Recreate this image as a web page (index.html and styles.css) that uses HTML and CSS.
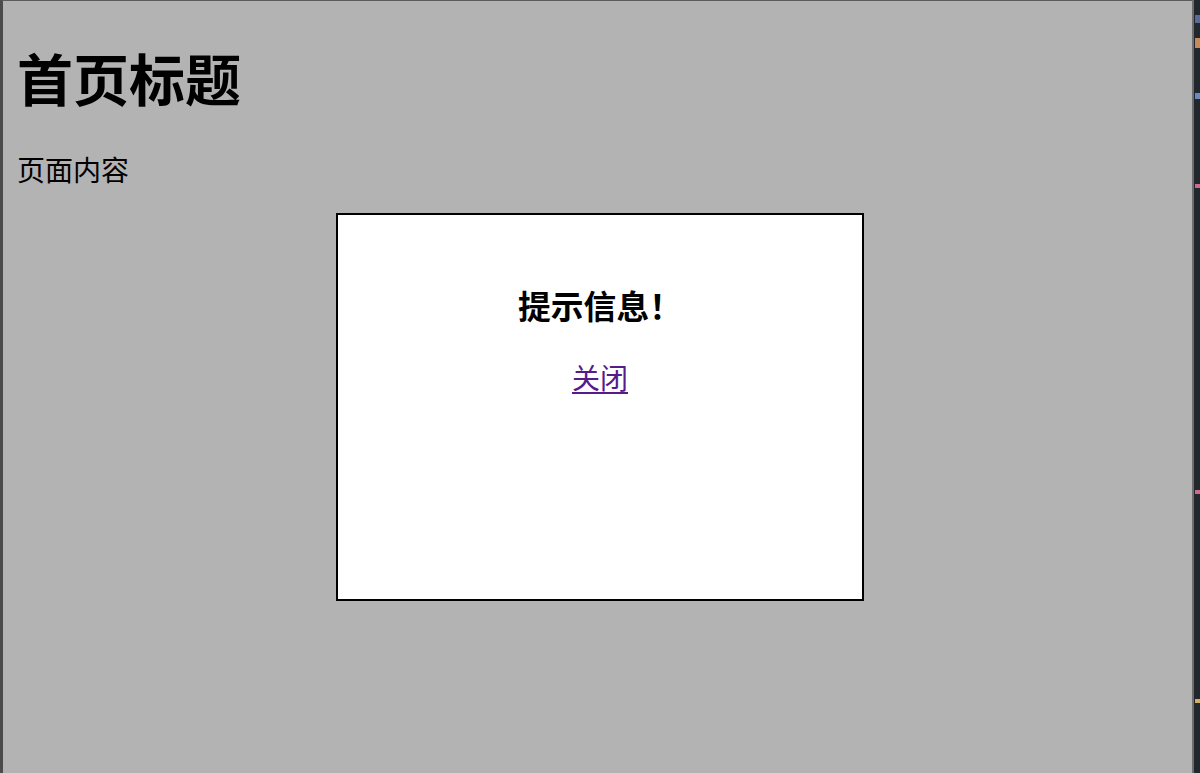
FILE: index.html
```html
<!DOCTYPE html>
<html lang="zh">
<head>
<meta charset="utf-8">
<title>首页</title>
<link rel="stylesheet" href="styles.css">
</head>
<body>
<div class="page">
  <h1 class="title">首页标题</h1>
  <p class="content">页面内容</p>
  <div class="modal">
    <h3 class="modal-title">提示信息！</h3>
    <p class="modal-action"><a class="close" href="#">关闭</a></p>
  </div>
</div>
<div class="editor">
  <span class="mark mark-a"></span>
  <span class="mark mark-b"></span>
  <span class="mark mark-c"></span>
  <span class="mark mark-d"></span>
  <span class="mark mark-e"></span>
  <span class="mark mark-f"></span>
</div>
</body>
</html>
```
FILE: styles.css
```css
html, body {
  margin: 0;
  height: 100%;
}
body {
  display: flex;
  background: #2a2e35;
  font-family: "Noto Sans CJK SC", "Noto Sans", sans-serif;
  color: #000;
  overflow: hidden;
}
.page {
  flex: 1;
  position: relative;
  background: #b3b3b3;
  border-left: 3px solid #4b4b4b;
  border-top: 1px solid #5c5c5c;
  padding: 0 14px;
}
.title {
  font-size: 56px;
  font-weight: bold;
  margin: 35px 0 0;
  line-height: 81px;
}
.content {
  font-size: 28px;
  line-height: 40px;
  margin: 32px 0 0;
}
.modal {
  position: absolute;
  left: 333px;
  top: 212px;
  width: 524px;
  height: 351px;
  background: #fff;
  border: 2px solid #000;
  text-align: center;
  padding-top: 33px;
  box-sizing: content-box;
}
.modal-title {
  font-size: 32.8px;
  font-weight: bold;
  line-height: 47px;
  margin: 33px 0 0;
}
.modal-action {
  font-size: 28px;
  line-height: 40px;
  margin: 29px 0 0;
}
.close {
  color: #551a8b;
  text-decoration: underline;
  text-underline-offset: 3px;
}
.editor {
  width: 6px;
  position: relative;
  border-left: 2px solid #6e6e6e;
  background: #22262d;
}
.mark {
  position: absolute;
  left: 1px;
  width: 5px;
  height: 4px;
}
.mark-a { top: 15px; height: 8px; background: #5a6a9a; }
.mark-b { top: 38px; height: 10px; background: #c48a5a; }
.mark-c { top: 93px; height: 6px; background: #6a8ac0; }
.mark-d { top: 184px; background: #d06a8a; }
.mark-e { top: 490px; background: #d06a8a; }
.mark-f { top: 699px; background: #d0b060; }
```
